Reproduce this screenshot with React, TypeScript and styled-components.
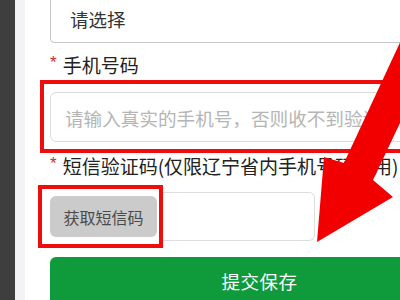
import React from "react";
import styled, { createGlobalStyle } from "styled-components";

const GlobalStyle = createGlobalStyle`
  html, body {
    margin: 0;
    padding: 0;
    background: #ffffff;
    overflow: hidden;
  }
  * {
    box-sizing: border-box;
  }
`;

const Screen = styled.div`
  position: relative;
  display: flex;
  width: 400px;
  height: 300px;
  overflow: hidden;
  font-family: "Noto Sans CJK SC", "Noto Sans", sans-serif;
`;

const SideBar = styled.div`
  flex: 0 0 15px;
  background: #3e3e3e;
`;

const Gutter = styled.div`
  flex: 0 0 10px;
  background: #f3f3f6;
`;

const FormPanel = styled.div`
  flex: 0 0 auto;
  width: 444px;
  padding: 0 0 0 25px;
  background: #ffffff;
`;

const SelectBox = styled.div`
  width: 419px;
  height: 49px;
  margin-top: -6px;
  display: flex;
  align-items: center;
  padding-left: 19px;
  border: 1px solid #c6c6c6;
  border-radius: 4px;
  font-size: 18.5px;
  color: #333333;
`;

const Label = styled.div<{ $top: number; $bottom: number }>`
  display: flex;
  align-items: center;
  height: 24px;
  box-sizing: content-box;
  padding-top: ${(p) => p.$top}px;
  padding-bottom: ${(p) => p.$bottom}px;
  font-size: 19px;
  line-height: 24px;
  color: #222222;
  white-space: nowrap;
`;

const Star = styled.span`
  font-family: "Liberation Sans", sans-serif;
  font-size: 17px;
  color: #d9261c;
  margin-right: 6px;
  position: relative;
  top: -2px;
`;

const Highlight = styled.div<{ $shift: number; $pad: string }>`
  margin-left: -${(p) => p.$shift}px;
  border: 4px solid #ee0c0c;
  padding: ${(p) => p.$pad};
  position: relative;
  z-index: 1;
`;

const TextInput = styled.div<{ $width: number }>`
  width: ${(p) => p.$width}px;
  height: 50px;
  display: flex;
  align-items: center;
  padding-left: 14px;
  border: 1px solid #dcdcdc;
  border-radius: 6px;
  font-size: 18.6px;
  color: #b5b5b5;
  white-space: nowrap;
  overflow: hidden;
  background: #ffffff;
`;

const CodeRow = styled.div`
  display: flex;
  align-items: center;
`;

const SmsButton = styled.div`
  width: 107px;
  height: 41px;
  display: flex;
  align-items: center;
  justify-content: center;
  background: #cbcbcb;
  border-radius: 6px;
  font-size: 16px;
  color: #4a4a4a;
`;

const CodeInput = styled.div`
  width: 152px;
  height: 49px;
  border: 1px solid #dedede;
  border-left: none;
  border-radius: 0 6px 6px 0;
`;

const SubmitButton = styled.div`
  width: 419px;
  height: 48px;
  margin-top: 9px;
  display: flex;
  align-items: center;
  justify-content: center;
  background: #0f9a3b;
  border-radius: 6px;
  font-size: 18.5px;
  color: #ffffff;
  letter-spacing: 0.5px;
`;

const ArrowLayer = styled.svg`
  position: absolute;
  left: 0;
  top: 0;
  width: 400px;
  height: 300px;
  pointer-events: none;
  z-index: 5;
`;

export default function App() {
  return (
    <>
      <GlobalStyle />
      <Screen>
        <SideBar />
        <Gutter />
        <FormPanel>
          <SelectBox>请选择</SelectBox>

          <Label $top={10} $bottom={3}>
            <Star>*</Star>手机号码
          </Label>
          <Highlight $shift={10} $pad="8px 0 7px 6px">
            <TextInput $width={419}>请输入真实的手机号，否则收不到验证码</TextInput>
          </Highlight>

          <Label $top={1} $bottom={7}>
            <Star>*</Star>短信验证码(仅限辽宁省内手机号码使用)
          </Label>
          <CodeRow>
            <Highlight $shift={12} $pad="7px 2px 7px 8px">
              <SmsButton>获取短信码</SmsButton>
            </Highlight>
            <CodeInput />
          </CodeRow>

          <SubmitButton>提交保存</SubmitButton>
        </FormPanel>

        <ArrowLayer viewBox="0 0 400 300">
          <polygon
            points="404,34 344,163 324,157 317,242 393,197 373,180 410,102"
            fill="#f20000"
          />
        </ArrowLayer>
      </Screen>
    </>
  );
}
